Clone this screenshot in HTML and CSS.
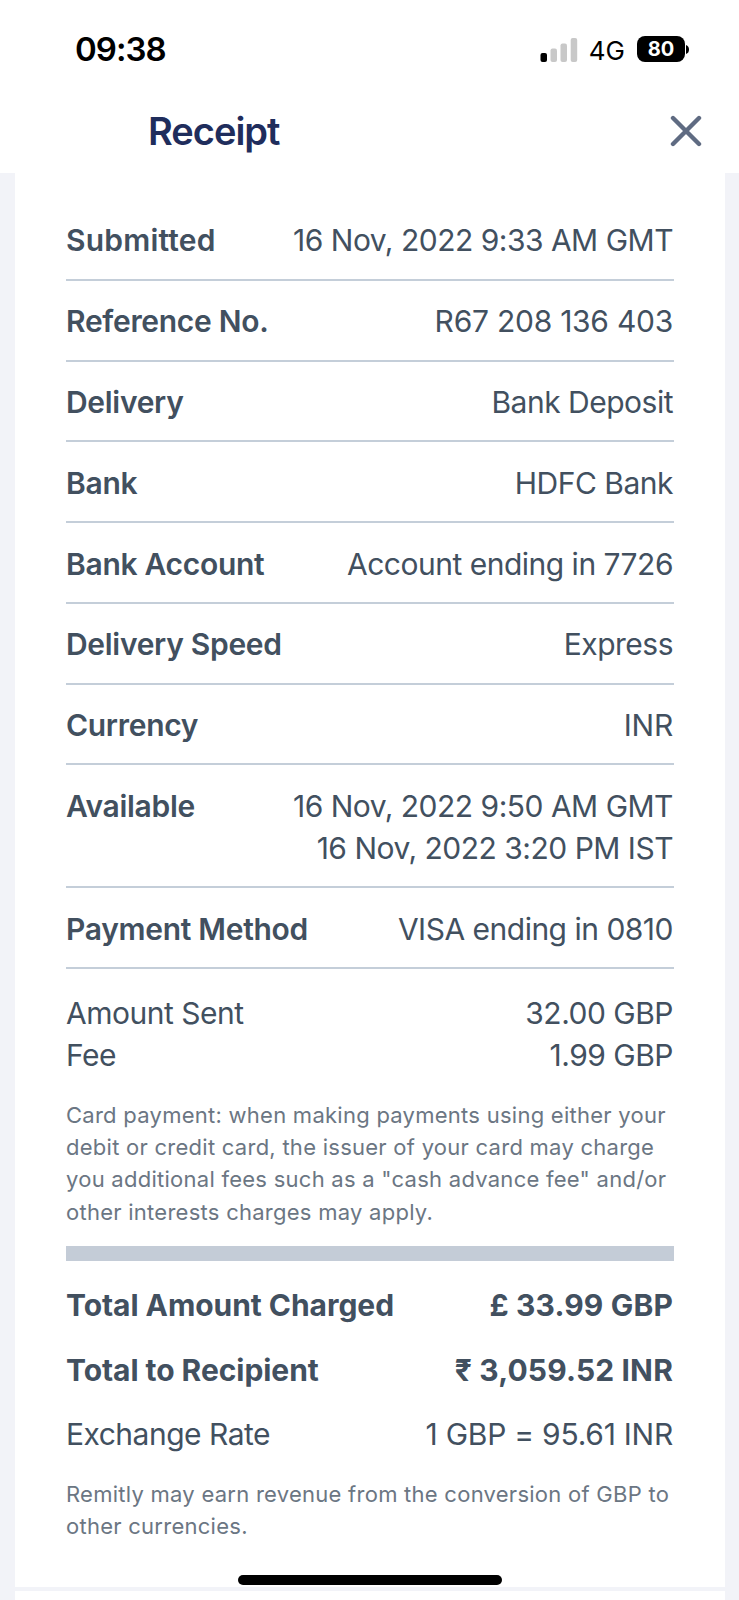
FILE: index.html
```html
<!DOCTYPE html>
<html lang="en"><head><meta charset="utf-8"><title>Receipt</title><link rel="stylesheet" href="styles.css"></head>
<body>
<header class="top">
<div class="status"><span class="time">09:38</span>
<div class="indicators"><svg class="signal" width="38" height="24" viewBox="0 0 38 24"><rect x="0.500" y="15" width="6.500" height="9" rx="2" fill="#000"/><rect x="10.500" y="10.500" width="6.500" height="13.500" rx="2" fill="#c8c8c8"/><rect x="20.500" y="5.500" width="6.500" height="18.500" rx="2" fill="#c8c8c8"/><rect x="30.700" y="0" width="6.500" height="24" rx="2" fill="#c8c8c8"/></svg><span class="net">4G</span><span class="battery">80</span><svg class="cap" width="3" height="9" viewBox="0 0 3 9"><path d="M0 0Q3 1 3 4.500Q3 8 0 9Z"/></svg></div></div>
<div class="title"><h1>Receipt</h1><svg class="close" width="32" height="32" viewBox="0 0 32 32"><path d="M3 3L29 29M29 3L3 29" stroke="#5f6b82" stroke-width="4.400" stroke-linecap="round"/></svg></div>
</header>
<main class="sheet">
<div class="row"><b class="wide">Submitted</b><span>16 Nov, 2022 9:33 AM GMT</span></div>
<div class="row"><b>Reference No.</b><span class="digits">R67 208 136 403</span></div>
<div class="row"><b>Delivery</b><span>Bank Deposit</span></div>
<div class="row"><b>Bank</b><span>HDFC Bank</span></div>
<div class="row"><b>Bank Account</b><span>Account ending in 7726</span></div>
<div class="row"><b>Delivery Speed</b><span>Express</span></div>
<div class="row"><b>Currency</b><span class="digits">INR</span></div>
<div class="row"><b>Available</b><span>16 Nov, 2022 9:50 AM GMT<br>16 Nov, 2022 3:20 PM IST</span></div>
<div class="row"><b>Payment Method</b><span>VISA ending in 0810</span></div>
<div class="amounts"><div class="line"><span>Amount Sent</span><span>32.00 GBP</span></div><div class="line"><span>Fee</span><span>1.99 GBP</span></div></div>
<p class="note">Card payment: when making payments using either your<br>debit or credit card, the issuer of your card may charge<br>you additional fees such as a "cash advance fee" and/or<br>other interests charges may apply.</p>
<div class="bar"></div>
<div class="line total"><b>Total Amount Charged</b><b class="sum">£ 33.99 GBP</b></div>
<div class="line total"><b>Total to Recipient</b><b class="sum">₹ 3,059.52 INR</b></div>
<div class="line total"><span>Exchange Rate</span><span class="digits">1 GBP = 95.61 INR</span></div>
<p class="note last">Remitly may earn revenue from the conversion of GBP to<br>other currencies.</p>
</main>
<div class="next"></div>
<div class="home"></div>
</body></html>
```
FILE: styles.css
```css
*{box-sizing:border-box}
body{margin:0;height:1600px;overflow:hidden;background:#f2f3f8;font-family:Inter,"Liberation Sans",sans-serif;color:#42505f;position:relative}
.top{height:173px;background:#fff}
.status{height:98px;display:flex;justify-content:space-between;padding:0 50px 0 75px;align-items:center}
.time{font-size:33px;font-weight:600;color:#000;letter-spacing:-1px}
.indicators{display:flex;align-items:center}
.signal{margin-top:1px}
.net{font-size:26px;color:#000;margin:2px 12px 0 11px}
.battery{width:48px;height:26px;border-radius:8px;background:#000;color:#fff;font-size:20px;line-height:26px;font-weight:700;text-align:center}
.cap{margin-left:1px}
.title{display:flex;justify-content:space-between;align-items:center;height:66px;padding:0 37px 0 148px}
h1{margin:0;font-size:38px;font-weight:600;color:#1f2d5c;letter-spacing:-1px}
.sheet{margin:0 14px 0 15px;height:1414px;background:#fff;padding:27px 51px 0 51px;font-size:30px;line-height:42px}
b{font-weight:600;letter-spacing:-.3px}
.wide{letter-spacing:.2px}
.row{display:flex;justify-content:space-between;padding:19.400px 0 17.400px;border-bottom:2px solid #c4ced9;text-align:right;white-space:nowrap}
.row span,.line span{letter-spacing:-.5px}
.row .digits,.line .digits{letter-spacing:-.25px}
.row :last-child,.line :last-child{padding-right:1px}
.amounts{padding-top:23.400px}
.line{display:flex;justify-content:space-between;white-space:nowrap}
.note{margin:22.200px 0 18px;font-size:22px;line-height:32.3px;color:#6b7683;white-space:nowrap;letter-spacing:.26px}
.bar{height:15px;background:#c4ccd7;margin-bottom:23.400px}
.total{margin-bottom:22.500px}
.total b{font-weight:700;letter-spacing:-.05px}
.total .sum{letter-spacing:.15px}
.last{margin:0}
.next{margin:4px 14px 0 15px;height:9px;background:#fff}
.home{position:absolute;left:238px;top:1575px;width:264px;height:10px;border-radius:5px;background:#000}
```
